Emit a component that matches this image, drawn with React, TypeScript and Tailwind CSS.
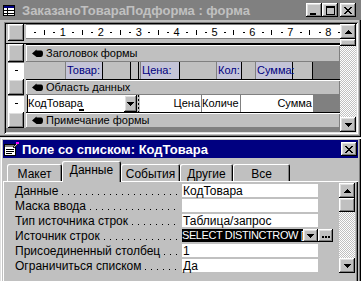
import React from "react";

const raised =
  "bg-[#c0c0c0] shadow-[inset_-1px_-1px_0_#000,inset_1px_1px_0_#fff,inset_-2px_-2px_0_#808080,inset_2px_2px_0_#dfdfdf]";
const raisedThin = "bg-[#c0c0c0] shadow-[inset_-1px_-1px_0_#808080,inset_1px_1px_0_#fff]";
const sunken =
  "shadow-[inset_1px_1px_0_#808080,inset_-1px_-1px_0_#fff,inset_2px_2px_0_#000,inset_-2px_-2px_0_#dfdfdf]";
const dither =
  "bg-[image:repeating-conic-gradient(#c0c0c0_0%_25%,#ffffff_0%_50%)] bg-[length:2px_2px]";

function Tri({ up }: { up?: boolean }) {
  const rows = [7, 5, 3, 1];
  return (
    <svg width="7" height="4" viewBox="0 0 7 4" shapeRendering="crispEdges">
      {rows.map((w, i) => (
        <rect key={i} x={(7 - w) / 2} y={up ? 3 - i : i} width={w} height={1} fill="#000" />
      ))}
    </svg>
  );
}

function ScrollBtn({ up, h = "h-[15px]" }: { up?: boolean; h?: string }) {
  return (
    <div className={`${raised} w-[16px] ${h} shrink-0 flex items-center justify-center`}>
      <Tri up={up} />
    </div>
  );
}

function CloseGlyph() {
  const px: [number, number][] = [];
  const pat = ["xx....xx", ".xx..xx.", "..xxxx..", "...xx...", "..xxxx..", ".xx..xx.", "xx....xx"];
  pat.forEach((r, y) => r.split("").forEach((c, x) => c === "x" && px.push([x, y])));
  return (
    <svg width="8" height="7" viewBox="0 0 8 7" shapeRendering="crispEdges">
      {px.map(([x, y]) => (
        <rect key={`${x}-${y}`} x={x} y={y} width={1} height={1} fill="#000" />
      ))}
    </svg>
  );
}

function TitleBtn({ kind, className = "" }: { kind: "min" | "max" | "close"; className?: string }) {
  return (
    <div className={`${raised} w-[16px] h-[14px] flex items-center justify-center ${className}`}>
      {kind === "min" && (
        <svg width="8" height="9" viewBox="0 0 8 9" shapeRendering="crispEdges" className="mt-[1px]">
          <rect x="0" y="7" width="6" height="2" fill="#000" />
        </svg>
      )}
      {kind === "max" && (
        <svg width="9" height="9" viewBox="0 0 9 9" shapeRendering="crispEdges">
          <rect x="0.5" y="0.5" width="8" height="8" fill="none" stroke="#000" />
          <rect x="0" y="1" width="9" height="1" fill="#000" />
        </svg>
      )}
      {kind === "close" && <CloseGlyph />}
    </div>
  );
}

function FormIcon() {
  return (
    <svg width="12" height="11" viewBox="0 0 12 11" shapeRendering="crispEdges">
      <rect x="0.5" y="0.5" width="11" height="10" fill="#fff" stroke="#000" />
      <rect x="1" y="1" width="10" height="2" fill="#000080" />
      <line x1="1" y1="5.5" x2="11" y2="5.5" stroke="#000" />
      <line x1="1" y1="8.5" x2="11" y2="8.5" stroke="#000" />
      <line x1="4.5" y1="3" x2="4.5" y2="10" stroke="#000" />
    </svg>
  );
}

function PropIcon() {
  return (
    <svg width="15" height="14" viewBox="0 0 15 14" shapeRendering="crispEdges">
      <rect x="0.5" y="2.5" width="11" height="11" fill="#fff" stroke="#000" />
      <rect x="1" y="3" width="10" height="2" fill="#808080" />
      <line x1="2" y1="7.5" x2="10" y2="7.5" stroke="#000" />
      <line x1="2" y1="9.5" x2="10" y2="9.5" stroke="#000" />
      <line x1="2" y1="11.5" x2="8" y2="11.5" stroke="#000" />
      <path d="M9 5 L13 1 L14 2 L10 6 Z" fill="#c0c0c0" stroke="#000" strokeWidth="0.8" />
      <rect x="12" y="0" width="3" height="2" fill="#ff00ff" />
    </svg>
  );
}

function Hand() {
  return (
    <svg width="11" height="9" viewBox="0 0 11 9">
      <path d="M0 4.5 L4.5 0.5 L4.5 1.5 L9 1.5 Q11 1.5 11 4.5 Q11 8 8.5 8 L4.5 8 Z" fill="#000" />
    </svg>
  );
}

function Ruler() {
  const U = 37.9;
  const marks: { x: number; kind: "dot" | "tick" | "num"; n?: number }[] = [];
  for (let i = 0; i <= 8; i++) {
    if (i > 0) marks.push({ x: i * U - 1, kind: "num", n: i });
    marks.push({ x: i * U + U * 0.25 - 1, kind: "dot" });
    marks.push({ x: i * U + U * 0.5 - 1, kind: "tick" });
    marks.push({ x: i * U + U * 0.75 - 1, kind: "dot" });
  }
  return (
    <div className="relative w-[314px] h-[17px] bg-white shadow-[inset_0_1px_0_#808080,inset_0_-2px_0_#c0c0c0,inset_0_-3px_0_#808080] overflow-hidden">
      {marks
        .filter((m) => m.x < 312)
        .map((m, i) =>
          m.kind === "num" ? (
            <span
              key={i}
              className="absolute top-[3px] text-[11px] leading-[11px] -translate-x-1/2"
              style={{ left: m.x }}
            >
              {m.n}
            </span>
          ) : m.kind === "tick" ? (
            <span key={i} className="absolute top-[6px] w-[1px] h-[5px] bg-black" style={{ left: m.x }} />
          ) : (
            <span key={i} className="absolute top-[8px] w-[2px] h-[1px] bg-black" style={{ left: m.x }} />
          )
        )}
    </div>
  );
}

function Bar({ title, h }: { title: string; h: string }) {
  return (
    <div className={`${raisedThin} w-[314px] ${h} flex items-center pl-[6px] shadow-[inset_0_1px_0_#000,inset_0_2px_0_#fff,inset_-1px_-1px_0_#808080,inset_1px_0_0_#fff]`}>
      <Hand />
      <span className="ml-[3px] pt-[1px]">{title}</span>
    </div>
  );
}

function LeftBox({ white }: { white?: boolean }) {
  return white ? (
    <div className="w-[16px] h-full bg-white flex items-center justify-center shadow-[inset_0_1px_0_#808080]">
      <span className="w-[3px] h-[1px] bg-black" />
    </div>
  ) : (
    <div className={`${raised} w-[16px] h-full`} />
  );
}

function Row({ h, left, children }: { h: string; left: React.ReactNode; children: React.ReactNode }) {
  return (
    <div className={`flex ${h} shrink-0`}>
      <div className="ml-[2px] mr-[2px]">{left}</div>
      {children}
    </div>
  );
}

function HeaderLabel({ w, text }: { w: string; text: string }) {
  return (
    <div className={`${w} h-full bg-[#c4c4d8] text-[#000080] flex items-center pl-[2px] shadow-[inset_-1px_0_0_#000,inset_1px_0_0_#808080] whitespace-nowrap`}>
      {text}
    </div>
  );
}

function FormWindow() {
  return (
    <div className="h-[137px] shrink-0 flex flex-col bg-[#c0c0c0] shadow-[inset_-1px_-1px_0_#000,inset_-2px_-2px_0_#808080]">
      <div className="h-[20px] shrink-0 bg-[#808080] flex items-center pl-[3px] pr-[5px]">
        <FormIcon />
        <span className="ml-[7px] font-bold text-[#c0c0c0] text-[13px]">ЗаказаноТовараПодформа : форма</span>
        <div className="ml-auto flex items-center">
          <TitleBtn kind="min" />
          <TitleBtn kind="max" />
          <TitleBtn kind="close" className="ml-[2px]" />
        </div>
      </div>
      <div className="flex-1 pl-[4px] pr-[3px] pt-[2px] pb-[3px] flex text-[11px]">
        <div className={`flex-1 flex p-[2px] bg-[#c0c0c0] ${sunken}`}>
          <div className="flex flex-col w-[334px]">
            <Row h="h-[17px]" left={<LeftBox />}>
              <Ruler />
            </Row>
            <div className="h-[3px] shrink-0 shadow-[inset_0_-1px_0_#000]" />
            <Row h="h-[18px]" left={<LeftBox />}>
              <Bar title="Заголовок формы" h="h-[18px]" />
            </Row>
            <Row h="h-[17px]" left={<LeftBox white />}>
              <div className="w-[314px] h-full flex bg-[#c0c0c0]">
                <div className="w-[39px]" />
                <HeaderLabel w="w-[38px]" text="Товар:" />
                <div className="w-[27px]" />
                <div className="w-[1px] bg-black" />
                <div className="w-[7px]" />
                <div className="w-[1px] bg-black" />
                <div className="w-[1px]" />
                <HeaderLabel w="w-[40px]" text="Цена:" />
                <div className="w-[36px]" />
                <HeaderLabel w="w-[26px]" text="Кол:" />
                <div className="w-[13px]" />
                <HeaderLabel w="w-[38px]" text="Сумма:" />
                <div className="w-[19px]" />
                <div className="w-[1px] bg-black" />
                <div className="flex-1 bg-[#808080]" />
              </div>
            </Row>
            <Row h="h-[16px]" left={<LeftBox />}>
              <Bar title="Область данных" h="h-[16px]" />
            </Row>
            <Row h="h-[17px]" left={<LeftBox white />}>
              <div className="w-[314px] h-full flex bg-[#c0c0c0]">
                <div className="w-[1px]" />
                <div className="w-[97px] h-full bg-white flex items-center pl-[1px] relative shadow-[inset_1px_0_0_#000]">
                  КодТовара
                  <span className="absolute left-[52px] bottom-[1px] w-[5px] h-[2px] bg-black" />
                </div>
                <div className={`${raised} w-[13px] h-full flex items-center justify-center`}>
                  <Tri />
                </div>
                <div className="w-[3px] h-full bg-[image:repeating-linear-gradient(#000_0_2px,#c0c0c0_2px_4px)] bg-[length:1px_4px] bg-repeat-y bg-[position:1px_0]" />
                <div className="w-[61px] h-full bg-white flex items-center justify-end pr-[1px]">Цена</div>
                <div className="w-[39px] h-full bg-white flex items-center pl-[1px] shadow-[inset_1px_0_0_#808080] whitespace-nowrap">
                  Количе
                </div>
                <div className="w-[73px] h-full bg-white flex items-center justify-end pr-[1px] shadow-[inset_1px_0_0_#808080]">
                  Сумма
                </div>
                <div className="flex-1 bg-[#808080]" />
              </div>
            </Row>
            <Row h="h-[16px]" left={<LeftBox />}>
              <Bar title="Примечание формы" h="h-[16px]" />
            </Row>
            <div className="flex-1 bg-[#808080]" />
          </div>
          <div className="flex flex-col w-[16px]">
            <ScrollBtn up />
            <div className={`${raised} w-[16px] h-[7px] shrink-0`} />
            <div className={`flex-1 ${dither}`} />
            <ScrollBtn />
          </div>
        </div>
      </div>
    </div>
  );
}

const props: [string, string][] = [
  ["Данные", "КодТовара"],
  ["Маска ввода", ""],
  ["Тип источника строк", "Таблица/запрос"],
  ["Источник строк", "SELECT DISTINCTROW ["],
  ["Присоединенный столбец", "1"],
  ["Ограничиться списком", "Да"],
];

const tabs = ["Макет", "Данные", "События", "Другие", "Все"];
const tabW = ["w-[55px]", "w-[59px]", "w-[59px]", "w-[53px]", "w-[57px]"];

function PropWindow() {
  return (
    <div className="flex-1 flex flex-col bg-[#c0c0c0] pt-[3px] px-[3px] shadow-[inset_1px_1px_0_#dfdfdf,inset_2px_2px_0_#fff,inset_-1px_0_0_#000,inset_-2px_0_0_#808080]">
      <div className="h-[18px] shrink-0 bg-[#000080] flex items-center pl-[1px] pr-[1px]">
        <PropIcon />
        <span className="ml-[3px] font-bold text-white text-[13px]">Поле со списком: КодТовара</span>
        <TitleBtn kind="close" className="ml-auto" />
      </div>
      <div className="h-[3px] shrink-0" />
      <div className="h-[20px] shrink-0 flex items-end pl-[4px] relative z-10">
        {tabs.map((t, i) =>
          i === 1 ? (
            <div
              key={t}
              className={`${tabW[i]} h-[21px] -mb-[1px] bg-[#c0c0c0] rounded-t-[2px] flex justify-center pt-[3px] shadow-[inset_1px_1px_0_#fff,inset_-1px_0_0_#000,inset_-2px_0_0_#808080]`}
            >
              {t}
            </div>
          ) : (
            <div
              key={t}
              className={`${tabW[i]} h-[17px] bg-[#c0c0c0] rounded-t-[2px] flex justify-center pt-[4px] shadow-[inset_1px_1px_0_#fff,inset_-1px_0_0_#000,inset_-2px_0_0_#808080]`}
            >
              {t}
            </div>
          )
        )}
      </div>
      <div className="flex-1 flex pt-[2px] pl-[5px] pr-[1px] shadow-[inset_1px_1px_0_#fff,inset_-1px_0_0_#000,inset_-2px_0_0_#808080]">
        <div className="flex flex-col w-[331px]">
          {props.map(([label, value], i) => (
            <div key={label} className="h-[15px] shrink-0 flex items-start">
              <div className="w-[174px] h-[15px] pl-[7px] pr-[4px] flex items-center">
                <span className="whitespace-nowrap">{label}</span>
                <span className="flex-1 self-end h-[1px] mb-[3px] ml-[4px] bg-[image:linear-gradient(90deg,#000_1px,transparent_1px)] bg-[length:6px_1px] bg-repeat-x" />
              </div>
              {i === 3 ? (
                <>
                  <div className="w-[121px] h-[13px] mt-[1px] bg-black text-white text-[11px] tracking-[-0.4px] flex items-center whitespace-nowrap overflow-hidden">
                    {value}
                  </div>
                  <div className={`${raised} w-[15px] h-[13px] mt-[1px] flex items-center justify-center`}>
                    <Tri />
                  </div>
                  <div className={`${raised} w-[15px] h-[13px] mt-[1px] flex items-end justify-center gap-[1px] pb-[4px]`}>
                    <span className="w-[2px] h-[2px] bg-black" />
                    <span className="w-[2px] h-[2px] bg-black" />
                    <span className="w-[2px] h-[2px] bg-black" />
                  </div>
                </>
              ) : (
                <div className="w-[136px] h-[13px] mt-[1px] bg-white flex items-center pl-[1px] whitespace-nowrap">
                  {value}
                </div>
              )}
            </div>
          ))}
        </div>
        <div className="flex flex-col w-[16px] h-[90px]">
          <ScrollBtn up />
          <div className={`${raised} w-[16px] h-[14px] shrink-0`} />
          <div className={`flex-1 ${dither}`} />
          <ScrollBtn />
        </div>
      </div>
    </div>
  );
}

export default function App() {
  return (
    <div className="w-[361px] h-[281px] overflow-hidden flex flex-col bg-[#c0c0c0] font-[family-name:Liberation_Sans,Arial,sans-serif] text-[12px] leading-none text-black select-none">
      <FormWindow />
      <PropWindow />
    </div>
  );
}
